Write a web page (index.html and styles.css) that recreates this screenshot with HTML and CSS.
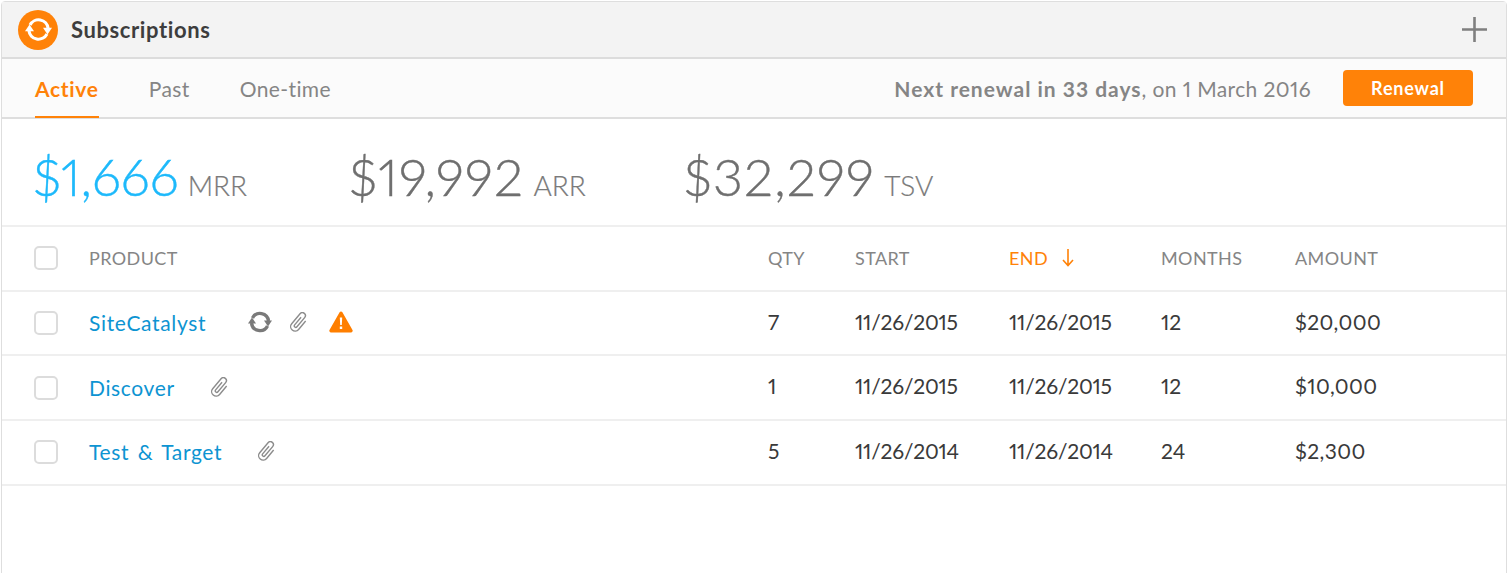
FILE: index.html
```html
<!DOCTYPE html>
<html lang="en">
<head>
    <meta charset="UTF-8">
    <title>Subscriptions</title>
    <link rel="stylesheet" href="styles.css">
</head>
<body>
    <div class="panel">
        <header class="panel-head">
            <span class="logo">
                <svg viewBox="0 0 24 24" width="27" height="27" fill="none" stroke="#fff" stroke-width="2.8">
                    <path d="M4.500 8A8.500 8.500 0 0 1 20.500 11"/>
                    <path d="M19.500 16A8.500 8.500 0 0 1 3.500 13"/>
                    <path d="M16 10.500h8l-4 6z" fill="#fff" stroke="none"/>
                    <path d="M8 13.500H0l4-6z" fill="#fff" stroke="none"/>
                </svg>
            </span>
            <h1>Subscriptions</h1>
            <svg class="plus" viewBox="0 0 25 25" width="25" height="25"><path d="M11.200 0h2.600v11.200H25v2.600H13.800V25h-2.600V13.800H0v-2.600h11.200z" fill="#7f7f7f"/></svg>
        </header>

        <nav class="tabs">
            <a class="tab active">Active</a>
            <a class="tab">Past</a>
            <a class="tab">One-time</a>
            <p class="renewal-note"><b>Next renewal in 33 days</b>, on 1 March 2016</p>
            <button class="renewal-btn">Renewal</button>
        </nav>

        <section class="stats">
            <div class="stat mrr"><span class="num">$1,666</span> <span class="unit">MRR</span></div>
            <div class="stat"><span class="num">$19,992</span> <span class="unit">ARR</span></div>
            <div class="stat"><span class="num">$32,299</span> <span class="unit">TSV</span></div>
        </section>

        <div class="row head">
            <span class="check"></span>
            <span>PRODUCT</span>
            <span>QTY</span>
            <span>START</span>
            <span class="sorted">END
                <svg viewBox="0 0 12 18" width="12" height="18" fill="none" stroke="#ff8208" stroke-width="1.6"><path d="M6 0v16M1 11l5 5.500 5-5.500"/></svg>
            </span>
            <span>MONTHS</span>
            <span>AMOUNT</span>
        </div>

        <div class="row">
            <span class="check"></span>
            <span class="product">
                <a>SiteCatalyst</a>
                <svg class="icon-sync" viewBox="0 0 24 24" width="24" height="24" fill="none" stroke="#7a7a7a" stroke-width="3.4">
                    <path d="M4.500 8A8.500 8.500 0 0 1 20.500 11"/>
                    <path d="M19.500 16A8.500 8.500 0 0 1 3.500 13"/>
                    <path d="M16 10.500h8l-4 6z" fill="#7a7a7a" stroke="none"/>
                    <path d="M8 13.500H0l4-6z" fill="#7a7a7a" stroke="none"/>
                </svg>
                <svg class="clip" viewBox="0 0 18 20" width="18" height="20"><path transform="translate(9 10) rotate(40) translate(-6 -11)" d="M4.500 6v10a1.500 1.500 0 0 0 3 0V4a3 3 0 0 0-6 0v13a4.500 4.500 0 0 0 9 0V6" fill="none" stroke="#8c8c8c" stroke-width="1.400"/></svg>
                <svg class="warn" viewBox="0 0 24 22" width="24" height="22"><path d="M12 .5c.6 0 1.100.3 1.400.8l10.100 17.700c.6 1-.1 2.400-1.400 2.400H1.900c-1.300 0-2-1.400-1.400-2.400L10.600 1.300c.3-.5.800-.8 1.400-.8z" fill="#ff7f00"/><path d="M10.800 6.500h2.400l-.4 7.500h-1.600zM10.800 15.500h2.400v2.400h-2.400z" fill="#fff"/></svg>
            </span>
            <span>7</span>
            <span class="date">11/26/2015</span>
            <span class="date">11/26/2015</span>
            <span>12</span>
            <span class="amount">$20,000</span>
        </div>

        <div class="row">
            <span class="check"></span>
            <span class="product">
                <a>Discover</a>
                <svg class="clip" viewBox="0 0 18 20" width="18" height="20"><path transform="translate(9 10) rotate(40) translate(-6 -11)" d="M4.500 6v10a1.500 1.500 0 0 0 3 0V4a3 3 0 0 0-6 0v13a4.500 4.500 0 0 0 9 0V6" fill="none" stroke="#8c8c8c" stroke-width="1.400"/></svg>
            </span>
            <span>1</span>
            <span class="date">11/26/2015</span>
            <span class="date">11/26/2015</span>
            <span>12</span>
            <span class="amount">$10,000</span>
        </div>

        <div class="row">
            <span class="check"></span>
            <span class="product">
                <a>Test &amp; Target</a>
                <svg class="clip" viewBox="0 0 18 20" width="18" height="20"><path transform="translate(9 10) rotate(40) translate(-6 -11)" d="M4.500 6v10a1.500 1.500 0 0 0 3 0V4a3 3 0 0 0-6 0v13a4.500 4.500 0 0 0 9 0V6" fill="none" stroke="#8c8c8c" stroke-width="1.400"/></svg>
            </span>
            <span>5</span>
            <span class="date">11/26/2014</span>
            <span class="date">11/26/2014</span>
            <span>24</span>
            <span class="amount">$2,300</span>
        </div>
    </div>
</body>
</html>
```

FILE: styles.css
```css
* {
    box-sizing: border-box;
}
body {
    margin: 0;
    padding: 1px 0 0 1px;
    height: 573px;
    overflow: hidden;
    background-color: #fff;
    color: #3a3a3a;
    font-family: "Lato", "Open Sans", sans-serif;
    font-variant-numeric: proportional-nums;
    font-variant-ligatures: none;
}
.panel {
    height: 590px;
    border: 1.5px solid #dedede;
    border-radius: 4px;
}
.panel-head {
    display: flex;
    align-items: center;
    height: 57px;
    padding: 0 19px 0 16px;
    background-color: #f3f3f3;
    border-bottom: 2px solid #dcdcdc;
}
.logo {
    display: flex;
    align-items: center;
    justify-content: center;
    width: 40px;
    height: 40px;
    border-radius: 50%;
    background-color: #ff8208;
}
.panel-head h1 {
    margin: 0 0 0 13px;
    font-size: 22px;
    font-weight: 700;
    letter-spacing: .6px;
    color: #3d3d3d;
}
.plus {
    margin-left: auto;
}
.tabs {
    display: flex;
    align-items: center;
    height: 60px;
    padding: 0 33px;
    background-color: #fbfbfb;
    border-bottom: 2px solid #dedede;
    font-size: 21px;
    color: #858585;
}
.tab {
    display: flex;
    align-items: center;
    height: 60px;
    margin-right: 50px;
    letter-spacing: .4px;
}
.tab.active {
    color: #ff8208;
    font-weight: 700;
    letter-spacing: .7px;
    border-bottom: 2px solid #ff8208;
    padding-top: 2px;
}
.renewal-note {
    margin: 0 32px 0 auto;
    letter-spacing: .4px;
}
.renewal-note b {
    letter-spacing: 1px;
}
.renewal-btn {
    width: 130px;
    height: 36px;
    border: none;
    border-radius: 4px;
    background-color: #ff8208;
    color: #fff;
    font-family: inherit;
    font-size: 18px;
    font-weight: 700;
    letter-spacing: .8px;
}
.stats {
    display: flex;
    align-items: baseline;
    height: 108px;
    padding: 26px 0 0 31px;
    border-bottom: 2px solid #efefef;
    color: #6f6f6f;
}
.stat {
    margin-right: 98px;
}
.stat.mrr {
    margin-right: 102px;
}
.num {
    font-size: 52px;
    font-weight: 300;
    letter-spacing: 1.2px;
    -webkit-text-stroke: .4px;
}
.unit {
    font-size: 28px;
    font-weight: 300;
    margin-left: 5px;
    color: #7a7a7a;
    -webkit-text-stroke: .2px;
}
.mrr .num {
    color: #1db9fb;
    letter-spacing: 0;
}
.row {
    display: grid;
    grid-template-columns: 55px 679px 87px 154px 152px 134px 1fr;
    align-items: center;
    height: 64.7px;
    padding-left: 32px;
    border-bottom: 2px solid #efefef;
    font-size: 21px;
}
.row span {
    margin-top: -4px;
}
.row .date {
    letter-spacing: -.2px;
}
.row .amount {
    letter-spacing: .4px;
}
.row.head {
    font-size: 18px;
    letter-spacing: .4px;
    color: #858585;
}
.row.head span {
    margin-top: 0;
}
.row .check {
    width: 24px;
    height: 24px;
    margin-top: 0;
    border: 2px solid #dcdcdc;
    border-radius: 5px;
    background-color: #fff;
}
.sorted {
    display: flex;
    align-items: center;
    gap: 14px;
    color: #ff8208;
}
.product {
    display: flex;
    align-items: center;
}
.product a {
    color: #0d94d2;
    letter-spacing: .65px;
    word-spacing: 2.5px;
    margin-top: 3px;
}
.product svg {
    margin-top: 2px;
}
.clip {
    margin-left: 36px;
}
.icon-sync {
    margin-left: 42px;
}
.icon-sync + .clip {
    margin-left: 18px;
}
.warn {
    margin-left: 21px;
}
```
